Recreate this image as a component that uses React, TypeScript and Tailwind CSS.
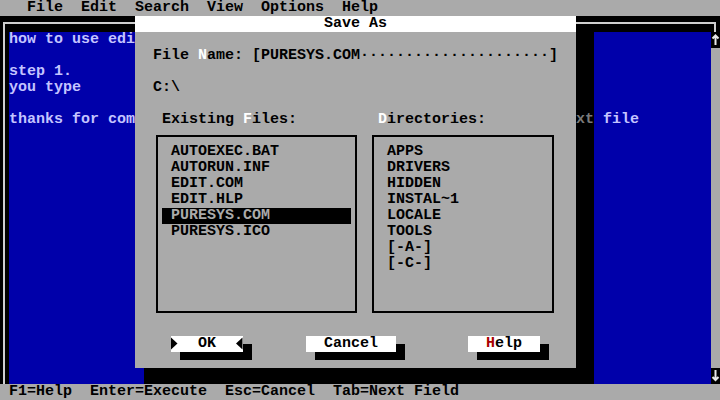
import React from "react";

const FONT =
  "font-[family-name:'Liberation_Mono',monospace] text-[15px] leading-[16px] font-bold whitespace-pre";

function UpArrow() {
  return (
    <svg width="9" height="16" viewBox="0 0 9 16">
      <path d="M4.5 3 L4.5 13 M1.5 6.5 L4.5 3.5 L7.5 6.5" stroke="#e8e8e8" strokeWidth="2" fill="none" />
    </svg>
  );
}

function DownArrow() {
  return (
    <svg width="9" height="16" viewBox="0 0 9 16">
      <path d="M4.5 2 L4.5 12.5 M1.5 9 L4.5 12 L7.5 9" stroke="#e8e8e8" strokeWidth="2" fill="none" />
    </svg>
  );
}

function TriRight() {
  return (
    <svg width="9" height="16" viewBox="0 0 9 16">
      <path d="M0 1.5 L6.5 7.5 L0 13.5 Z" fill="#000" />
    </svg>
  );
}

function TriLeft() {
  return (
    <svg width="9" height="16" viewBox="0 0 9 16">
      <path d="M8.5 1.5 L2 7.5 L8.5 13.5 Z" fill="#000" />
    </svg>
  );
}

function DosButton({
  faceClass,
  shadowClass,
  children,
}: {
  faceClass: string;
  shadowClass: string;
  children: React.ReactNode;
}) {
  return (
    <div className="flex flex-col">
      <div className="flex">
        <div className={faceClass}>{children}</div>
        <div className="flex h-4 w-[9px] flex-col">
          <div className="h-2" />
          <div className="h-2 bg-black" />
        </div>
      </div>
      <div className={shadowClass} />
    </div>
  );
}

const files = ["AUTOEXEC.BAT", "AUTORUN.INF", "EDIT.COM", "EDIT.HLP", "PURESYS.COM", "PURESYS.ICO"];
const dirs = ["APPS", "DRIVERS", "HIDDEN", "INSTAL~1", "LOCALE", "TOOLS", "[-A-]", "[-C-]"];

export default function App() {
  return (
    <div className={`relative h-[400px] w-[720px] overflow-hidden bg-[#aaaaaa] ${FONT}`}>
      {/* Menu bar */}
      <div className="h-4 bg-[#aaaaaa] text-black">{"   File  Edit  Search  View  Options  Help"}</div>

      {/* Editor window */}
      <div className="flex h-[368px] flex-col">
        <div className="h-4 bg-black pl-[3px] pr-[4px] pt-[6px]">
          <div className="h-[10px] border-l-2 border-r-2 border-t-2 border-[#cfcfcf]" />
        </div>
        <div className="flex h-[352px]">
          <div className="w-[9px] bg-black pl-[3px]">
            <div className="h-full border-l-2 border-[#cfcfcf]" />
          </div>
          <div className="flex-1 bg-[#0000aa] text-[#c4c4ff]">
            <div className="h-4">how to use edi</div>
            <div className="h-4" />
            <div className="h-4">step 1.</div>
            <div className="h-4">you type</div>
            <div className="h-4" />
            <div className="flex h-4">
              <span className="w-[594px]">thanks for com</span>
              <span>file</span>
            </div>
          </div>
          <div className="flex w-[9px] flex-col">
            <div className="h-4 bg-black">
              <UpArrow />
            </div>
            <div className="flex-1 bg-[#aaaaaa]" />
            <div className="h-4 bg-black">
              <DownArrow />
            </div>
          </div>
        </div>
      </div>

      {/* Status bar */}
      <div className="h-4 bg-[#aaaaaa] text-black">{" F1=Help  Enter=Execute  Esc=Cancel  Tab=Next Field"}</div>

      {/* Dialog shadows */}
      <div className="absolute left-[576px] top-[32px] h-[352px] w-[18px] bg-black pt-[80px] text-[#7a7a7a]">xt</div>
      <div className="absolute left-[144px] top-[368px] h-4 w-[432px] bg-black" />

      {/* Save As dialog */}
      <div className="absolute left-[135px] top-[16px] flex h-[352px] w-[441px] flex-col bg-[#aaaaaa] text-black">
        <div className="h-4 bg-white text-center">Save As</div>
        <div className="h-4" />
        <div className="flex h-4 pl-[18px]">
          <span className="w-[45px] overflow-hidden">{"File "}</span>
          <span className="w-[9px] overflow-hidden text-white">N</span>
          <span>{"ame: [PURESYS.COM" + "\u00b7".repeat(21) + "]"}</span>
        </div>
        <div className="h-4" />
        <div className="h-4 pl-[18px]">{"C:\\"}</div>
        <div className="h-4" />
        <div className="flex h-4 pl-[27px]">
          <span className="w-[81px] overflow-hidden">{"Existing "}</span>
          <span className="w-[9px] overflow-hidden text-white">F</span>
          <span className="w-[126px] overflow-hidden">{"iles:"}</span>
          <span className="w-[9px] overflow-hidden text-white">D</span>
          <span>{"irectories:"}</span>
        </div>

        <div className="flex h-[192px] items-start pt-[7px]">
          <div className="ml-[21px] h-[178px] w-[201px] border-2 border-black pl-[4px] pt-[7px]">
            {files.map((f) => (
              <div
                key={f}
                className={
                  f === "PURESYS.COM"
                    ? "h-4 w-[189px] bg-black pl-[9px] text-[#aaaaaa]"
                    : "h-4 w-[189px] pl-[9px]"
                }
              >
                {f}
              </div>
            ))}
          </div>
          <div className="ml-[15px] h-[178px] w-[182px] border-2 border-black pl-[13px] pt-[7px]">
            {dirs.map((d) => (
              <div key={d} className="h-4">
                {d}
              </div>
            ))}
          </div>
        </div>

        <div className="h-4" />
        <div className="flex pl-[36px]">
          <DosButton faceClass="flex h-4 w-[72px] bg-white" shadowClass="ml-[9px] h-2 w-[72px] bg-black">
            <TriRight />
            <span className="w-[54px] text-center">OK</span>
            <TriLeft />
          </DosButton>
          <div className="ml-[54px]">
            <DosButton faceClass="h-4 w-[90px] bg-white text-center" shadowClass="ml-[9px] h-2 w-[90px] bg-black">
              Cancel
            </DosButton>
          </div>
          <div className="ml-[63px]">
            <DosButton faceClass="flex h-4 w-[72px] bg-white pl-[18px]" shadowClass="ml-[9px] h-2 w-[72px] bg-black">
              <span className="w-[9px] overflow-hidden text-[#aa0000]">H</span>
              <span>elp</span>
            </DosButton>
          </div>
        </div>
      </div>
    </div>
  );
}
